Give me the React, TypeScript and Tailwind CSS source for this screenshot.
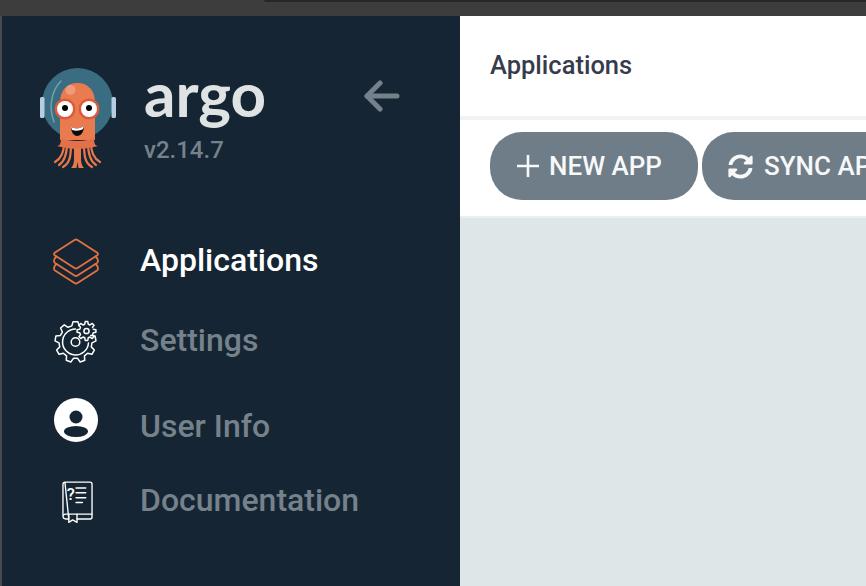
import React from "react";

function gearPath(cx: number, cy: number, rOut: number, rIn: number, teeth: number, a0 = 0, a1 = 360) {
  const pts: string[] = [];
  const step = 360 / teeth;
  let first = true;
  for (let a = a0; a < a1 - 0.01; a += step) {
    const w = [a - step * 0.32, a - step * 0.17, a + step * 0.17, a + step * 0.32];
    const r = [rIn, rOut, rOut, rIn];
    w.forEach((d, i) => {
      const t = (d * Math.PI) / 180;
      const x = cx + r[i] * Math.cos(t);
      const y = cy + r[i] * Math.sin(t);
      pts.push(`${first ? "M" : "L"}${x.toFixed(2)} ${y.toFixed(2)}`);
      first = false;
    });
  }
  return pts.join(" ");
}

function Logo() {
  return (
    <svg width="84" height="106" viewBox="36 66 84 106" className="shrink-0">
      <circle cx="77.5" cy="103.5" r="35.5" fill="#3a6d82" />
      <rect x="40" y="97" width="4.5" height="21" rx="1.5" fill="#b4cde2" />
      <rect x="111.5" y="97" width="4.5" height="21" rx="1.5" fill="#b4cde2" />
      <path d="M61 81 C52 90 48 106 54 122" fill="none" stroke="#6ea3ae" strokeWidth="1.5" strokeLinecap="round" />
      <g fill="none" stroke="#e8784c" strokeWidth="2.2" strokeLinecap="round">
        <path d="M64 143 C64 152 62 158 55 162" />
        <path d="M67 143 C67 154 65 161 59 165" />
        <path d="M71 143 C71 156 70 163 63 167" />
        <path d="M84 143 C84 156 85 163 92 167" />
        <path d="M88 143 C88 154 90 161 96 165" />
        <path d="M91 143 C91 152 93 158 100 162" />
      </g>
      <path d="M74 143 L74 160 C74 164 72 167 71 168 L76.5 168 L77.5 162 L78.5 168 L84 168 C83 167 81 164 81 160 L81 143 Z" fill="#e8784c" />
      <path d="M60 140 L60 103 C60 90 67 83 77.5 83 C88 83 95 90 95 103 L95 140 Z" fill="#e97b4f" />
      <path d="M57 146 C60 146 61 143 61 138 C70 142 85 142 94 138 C94 143 95 146 98 146 C90 148 82 149 77.5 149 C73 149 65 148 57 146 Z" fill="#e2714a" />
      <circle cx="70.5" cy="90" r="5" fill="#f09a7c" />
      <circle cx="65" cy="109" r="10.5" fill="#dc5a3c" />
      <circle cx="89" cy="109" r="10.5" fill="#dc5a3c" />
      <circle cx="65" cy="109" r="8" fill="#ffffff" />
      <circle cx="89" cy="109" r="8" fill="#ffffff" />
      <circle cx="65" cy="108" r="3" fill="#000000" />
      <circle cx="89" cy="108" r="3" fill="#000000" />
      <path d="M71 127 C75 129 80 129 84 126 C84 132 81 136 77 136 C74 136 71 132 71 127 Z" fill="#0b0b0b" />
      <path d="M71 127 C75 129 80 129 84 126 L83 129 C80 131 75 131 72 130 Z" fill="#ffffff" />
    </svg>
  );
}

function LayersIcon() {
  return (
    <svg width="50" height="48" viewBox="0 0 50 48" fill="none" stroke="#e2723f" strokeWidth="1.8" strokeLinejoin="round" strokeLinecap="round" className="mt-[3px]">
      <path d="M23.5 2 Q25 1 26.5 2 L46 14.5 Q48 16 46 17.5 L26.5 30 Q25 31 23.5 30 L4 17.5 Q2 16 4 14.5 Z" />
      <path d="M5.5 18.5 L4 20 Q2 23.5 4 25 L23.5 37.5 Q25 38.5 26.5 37.5 L46 25 Q48 23.5 46 20 L44.5 18.5" />
      <path d="M5.5 26 L4 27.5 Q2 31 4 32.5 L23.5 45 Q25 46 26.5 45 L46 32.5 Q48 31 46 27.5 L44.5 26" />
    </svg>
  );
}

function GearsIcon() {
  const big = gearPath(21.5, 26, 20.5, 16.5, 9, -10, 290);
  const small = gearPath(32.5, 15, 9.5, 7, 8);
  return (
    <svg width="44" height="48" viewBox="0 0 44 48" fill="none" stroke="#ffffff" strokeWidth="1.5" strokeLinejoin="round" strokeLinecap="round">
      <path d={big} />
      <path d={small} />
      <circle cx="32.5" cy="15" r="2.6" />
      <circle cx="21.5" cy="26" r="4.3" />
      <path d="M21.5 13 A13 13 0 1 0 34.5 27" />
    </svg>
  );
}

function UserIcon() {
  return (
    <svg width="44" height="44" viewBox="0 0 44 44" className="mb-[12px]">
      <circle cx="22" cy="22" r="22" fill="#ffffff" />
      <circle cx="22" cy="19" r="6.5" fill="#152532" />
      <ellipse cx="22" cy="33.5" rx="12" ry="5.5" fill="#152532" />
    </svg>
  );
}

function BookIcon() {
  return (
    <svg width="31" height="43" viewBox="0 0 32 44" fill="none" stroke="#ffffff" strokeWidth="1.4" strokeLinecap="round" strokeLinejoin="round" className="mt-[4px] ml-[3px]">
      <path d="M3 1 H29 A2 2 0 0 1 31 3 V37 A2 2 0 0 1 29 39 H15.5 M7 39 H4 A3 3 0 0 1 1 36 V3 A2 2 0 0 1 3 1 Z" />
      <path d="M1.5 35 A3 3 0 0 1 4 34 H31" />
      <path d="M7 34 V42.5 L11 40 L15.5 42.5 V34" />
      <path d="M14.5 7 H24.5 M14.5 12 H24.5 M14.5 17 H24.5 M14.5 22 H21" strokeWidth="1.5" />
      <text x="5" y="19" fontSize="17" fontWeight="500" fontFamily="Roboto, sans-serif" fill="#ffffff" stroke="none">?</text>
    </svg>
  );
}

function NavRow({ icon, label, active, className }: { icon: React.ReactNode; label: string; active?: boolean; className: string }) {
  return (
    <div className={`flex items-center ${className}`}>
      <div className="w-[53px] shrink-0 flex justify-center mr-[38px]">{icon}</div>
      <span className={`text-[32px] leading-none font-medium ${active ? "text-white" : "text-[#76828b]"}`}>{label}</span>
    </div>
  );
}

export default function App() {
  return (
    <div className="w-[866px] h-[586px] overflow-hidden flex flex-col bg-[#dee6e8] font-['Roboto',sans-serif]">
      <div className="h-[16px] shrink-0 bg-[#3d3d3d] pl-[264px]">
        <div className="h-[2px] bg-[#272727] rounded-bl-[4px]" />
      </div>
      <div className="flex-1 min-h-0 flex">
        <aside className="w-[460px] shrink-0 bg-[#152533] pl-[47px] flex flex-col border-l-2 border-[#454b50]">
          <div className="flex h-[204px] -ml-[13px] pt-[50px] items-start">
            <Logo />
            <div className="ml-[24px] w-[220px] flex flex-col">
              <span className="text-[#dfe3e4] text-[62px] leading-[62px] font-bold font-['Lato',sans-serif] -mt-[4px]">argo</span>
              <span className="text-[#76828b] text-[24px] leading-[28px] font-medium mt-[12px]">v2.14.7</span>
            </div>
            <svg width="36" height="32" viewBox="0 0 36 32" className="mt-[14px]" fill="none" stroke="#75818a" strokeWidth="5" strokeLinecap="round" strokeLinejoin="round">
              <path d="M3 16 H33" />
              <path d="M16 3 L3 16 L16 29" />
            </svg>
          </div>
          <NavRow className="h-[80px]" active icon={<LayersIcon />} label="Applications" />
          <NavRow className="h-[80px]" icon={<GearsIcon />} label="Settings" />
          <NavRow className="h-[80px] mt-[6px]" icon={<UserIcon />} label="User Info" />
          <NavRow className="h-[68px]" icon={<BookIcon />} label="Documentation" />
        </aside>
        <main className="flex-1 min-w-0 flex flex-col">
          <div className="h-[104px] shrink-0 bg-white border-b-4 border-[#eff3f5] pl-[30px] flex items-center">
            <span className="text-[25.5px] font-medium text-[#363c4a] leading-none">Applications</span>
          </div>
          <div className="h-[98px] shrink-0 bg-white border-b-2 border-[#eaeff1] pl-[30px] flex items-start pt-[12px] gap-[4px] overflow-hidden">
            <button className="w-[208px] h-[68px] shrink-0 rounded-[32px] bg-[#6f7d88] text-[#f7f8f8] text-[26px] font-medium flex items-center pl-[27px]">
              <svg width="22" height="22" viewBox="0 0 22 22" stroke="currentColor" strokeWidth="2.6" strokeLinecap="square" className="mr-[10px]">
                <path d="M11 1 V21 M1 11 H21" />
              </svg>
              NEW APP
            </button>
            <button className="w-[260px] h-[68px] shrink-0 rounded-[32px] bg-[#6f7d88] text-[#f7f8f8] text-[26px] font-medium flex items-center pl-[26px] whitespace-nowrap">
              <svg width="25" height="25" viewBox="0 0 512 512" fill="currentColor" className="mr-[11px]">
                <path d="M370.72 133.28C339.458 104.008 298.888 87.962 255.848 88c-77.458.068-144.328 53.178-162.791 126.85-1.344 5.363-6.122 9.15-11.651 9.15H24.103c-7.498 0-13.194-6.807-11.807-14.176C33.933 94.924 134.813 8 256 8c66.448 0 126.791 26.136 171.315 68.685L463.03 40.97C478.149 25.851 504 36.559 504 57.941V192c0 13.255-10.745 24-24 24H345.941c-21.382 0-32.09-25.851-16.971-40.971l41.75-41.749zM32 296h134.059c21.382 0 32.09 25.851 16.971 40.971l-41.75 41.75c31.262 29.273 71.835 45.319 114.876 45.28 77.418-.07 144.315-53.144 162.787-126.849 1.344-5.363 6.122-9.15 11.651-9.15h57.304c7.498 0 13.194 6.807 11.807 14.176C478.067 417.076 377.187 504 256 504c-66.448 0-126.791-26.136-171.315-68.685L48.97 471.03C33.851 486.149 8 475.441 8 454.059V320c0-13.255 10.745-24 24-24z" />
              </svg>
              SYNC APPS
            </button>
          </div>
          <div className="flex-1 bg-[#dee6e8]" />
        </main>
      </div>
    </div>
  );
}
